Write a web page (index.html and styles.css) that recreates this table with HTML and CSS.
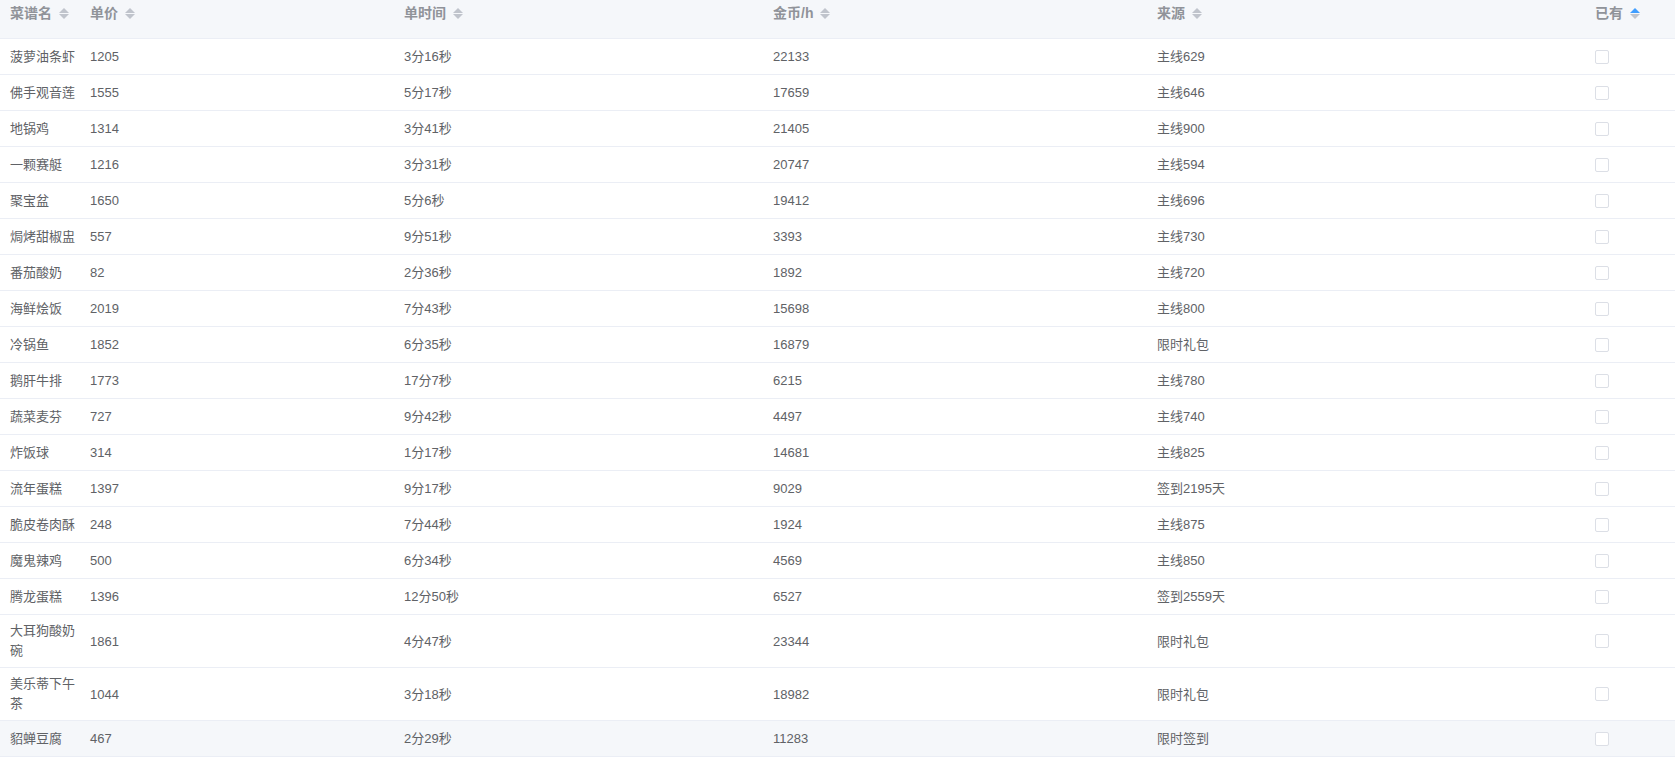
FILE: index.html
```html
<!DOCTYPE html>
<html lang="zh-CN">
<head>
<meta charset="utf-8">
<title>菜谱</title>
<link rel="stylesheet" href="styles.css">
</head>
<body>
<table class="recipe-table">
  <colgroup>
    <col class="c-name"><col class="c-price"><col class="c-time"><col class="c-gold"><col class="c-src"><col class="c-own">
  </colgroup>
  <thead>
    <tr>
      <th><div class="th-cell">菜谱名<svg class="caret" viewBox="0 0 10 11" width="10" height="11"><polygon class="up" points="0,5 5,0 10,5"/><polygon class="down" points="0,6 10,6 5,11"/></svg></div></th>
      <th><div class="th-cell">单价<svg class="caret" viewBox="0 0 10 11" width="10" height="11"><polygon class="up" points="0,5 5,0 10,5"/><polygon class="down" points="0,6 10,6 5,11"/></svg></div></th>
      <th><div class="th-cell">单时间<svg class="caret" viewBox="0 0 10 11" width="10" height="11"><polygon class="up" points="0,5 5,0 10,5"/><polygon class="down" points="0,6 10,6 5,11"/></svg></div></th>
      <th><div class="th-cell">金币/h<svg class="caret" viewBox="0 0 10 11" width="10" height="11"><polygon class="up" points="0,5 5,0 10,5"/><polygon class="down" points="0,6 10,6 5,11"/></svg></div></th>
      <th><div class="th-cell">来源<svg class="caret" viewBox="0 0 10 11" width="10" height="11"><polygon class="up" points="0,5 5,0 10,5"/><polygon class="down" points="0,6 10,6 5,11"/></svg></div></th>
      <th><div class="th-cell">已有<svg class="caret" viewBox="0 0 10 11" width="10" height="11"><polygon class="up active" points="0,5 5,0 10,5"/><polygon class="down" points="0,6 10,6 5,11"/></svg></div></th>
    </tr>
  </thead>
  <tbody>
    <tr><td class="first"><div class="name">菠萝油条虾</div></td><td>1205</td><td>3分16秒</td><td>22133</td><td>主线629</td><td><span class="checkbox"></span></td></tr>
    <tr><td class="first"><div class="name">佛手观音莲</div></td><td>1555</td><td>5分17秒</td><td>17659</td><td>主线646</td><td><span class="checkbox"></span></td></tr>
    <tr><td class="first"><div class="name">地锅鸡</div></td><td>1314</td><td>3分41秒</td><td>21405</td><td>主线900</td><td><span class="checkbox"></span></td></tr>
    <tr><td class="first"><div class="name">一颗赛艇</div></td><td>1216</td><td>3分31秒</td><td>20747</td><td>主线594</td><td><span class="checkbox"></span></td></tr>
    <tr><td class="first"><div class="name">聚宝盆</div></td><td>1650</td><td>5分6秒</td><td>19412</td><td>主线696</td><td><span class="checkbox"></span></td></tr>
    <tr><td class="first"><div class="name">焗烤甜椒盅</div></td><td>557</td><td>9分51秒</td><td>3393</td><td>主线730</td><td><span class="checkbox"></span></td></tr>
    <tr><td class="first"><div class="name">番茄酸奶</div></td><td>82</td><td>2分36秒</td><td>1892</td><td>主线720</td><td><span class="checkbox"></span></td></tr>
    <tr><td class="first"><div class="name">海鲜烩饭</div></td><td>2019</td><td>7分43秒</td><td>15698</td><td>主线800</td><td><span class="checkbox"></span></td></tr>
    <tr><td class="first"><div class="name">冷锅鱼</div></td><td>1852</td><td>6分35秒</td><td>16879</td><td>限时礼包</td><td><span class="checkbox"></span></td></tr>
    <tr><td class="first"><div class="name">鹅肝牛排</div></td><td>1773</td><td>17分7秒</td><td>6215</td><td>主线780</td><td><span class="checkbox"></span></td></tr>
    <tr><td class="first"><div class="name">蔬菜麦芬</div></td><td>727</td><td>9分42秒</td><td>4497</td><td>主线740</td><td><span class="checkbox"></span></td></tr>
    <tr><td class="first"><div class="name">炸饭球</div></td><td>314</td><td>1分17秒</td><td>14681</td><td>主线825</td><td><span class="checkbox"></span></td></tr>
    <tr><td class="first"><div class="name">流年蛋糕</div></td><td>1397</td><td>9分17秒</td><td>9029</td><td>签到2195天</td><td><span class="checkbox"></span></td></tr>
    <tr><td class="first"><div class="name">脆皮卷肉酥</div></td><td>248</td><td>7分44秒</td><td>1924</td><td>主线875</td><td><span class="checkbox"></span></td></tr>
    <tr><td class="first"><div class="name">魔鬼辣鸡</div></td><td>500</td><td>6分34秒</td><td>4569</td><td>主线850</td><td><span class="checkbox"></span></td></tr>
    <tr><td class="first"><div class="name">腾龙蛋糕</div></td><td>1396</td><td>12分50秒</td><td>6527</td><td>签到2559天</td><td><span class="checkbox"></span></td></tr>
    <tr><td class="first"><div class="name">大耳狗酸奶碗</div></td><td>1861</td><td>4分47秒</td><td>23344</td><td>限时礼包</td><td><span class="checkbox"></span></td></tr>
    <tr><td class="first"><div class="name">美乐蒂下午茶</div></td><td>1044</td><td>3分18秒</td><td>18982</td><td>限时礼包</td><td><span class="checkbox"></span></td></tr>
    <tr class="hover"><td class="first"><div class="name">貂蝉豆腐</div></td><td>467</td><td>2分29秒</td><td>11283</td><td>限时签到</td><td><span class="checkbox"></span></td></tr>
  </tbody>
</table>
</body>
</html>
```
FILE: styles.css
```css
html, body {
  margin: 0;
  padding: 0;
  background: #ffffff;
}

body {
  font-family: "Liberation Sans", "Noto Sans CJK SC", sans-serif;
  -webkit-font-smoothing: antialiased;
}

.recipe-table {
  width: 1675px;
  border-collapse: collapse;
  table-layout: fixed;
  color: #606266;
  font-size: 13px;
}

.c-name { width: 80px; }
.c-price { width: 314px; }
.c-time { width: 369px; }
.c-gold { width: 384px; }
.c-src { width: 438px; }
.c-own { width: 90px; }

.recipe-table th {
  background: #f5f7fa;
  color: #909399;
  font-size: 14px;
  font-weight: 700;
  text-align: left;
  padding: 0 10px;
  border-bottom: 1px solid #ebeef5;
  white-space: nowrap;
  vertical-align: top;
}

.th-cell {
  display: flex;
  align-items: center;
  height: 26px;
  padding-bottom: 12px;
  line-height: 20px;
}

.caret {
  flex: none;
  margin-left: 7px;
  margin-top: 1px;
}

.caret polygon {
  fill: #c0c4cc;
}

.caret polygon.active {
  fill: #409eff;
}

.recipe-table td {
  padding: 6px 10px;
  line-height: 23px;
  border-bottom: 1px solid #ebeef5;
  vertical-align: middle;
}

.recipe-table td.first {
  padding-right: 4px;
}

.name {
  display: flex;
  align-items: center;
  min-height: 23px;
  line-height: 20px;
  word-break: break-all;
}

.recipe-table tr.hover td {
  background: #f5f7fa;
}

.checkbox {
  display: inline-block;
  width: 12px;
  height: 12px;
  border: 1px solid #dcdfe6;
  border-radius: 2px;
  background: #ffffff;
  vertical-align: middle;
  margin-top: -2px;
}
```
